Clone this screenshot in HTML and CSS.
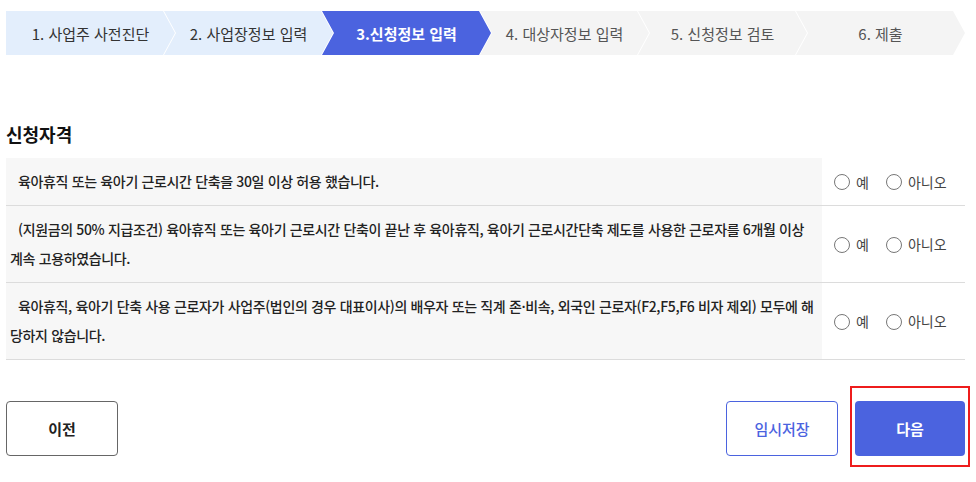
FILE: index.html
```html
<!DOCTYPE html>
<html lang="ko">
<head>
<meta charset="utf-8">
<link rel="stylesheet" href="styles.css">
</head>
<body>
<div class="page">
  <ol class="steps">
    <li class="step done first">1. 사업주 사전진단</li>
    <li class="step done">2. 사업장정보 입력</li>
    <li class="step active">3.신청정보 입력</li>
    <li class="step">4. 대상자정보 입력</li>
    <li class="step">5. 신청정보 검토</li>
    <li class="step">6. 제출</li>
  </ol>

  <h2 class="title">신청자격</h2>

  <div class="table">
    <div class="row row-1">
      <div class="q">육아휴직 또는 육아기 근로시간 단축을 30일 이상 허용 했습니다.</div>
      <div class="a">
        <label class="opt"><span class="radio"></span>예</label>
        <label class="opt"><span class="radio"></span>아니오</label>
      </div>
    </div>
    <div class="row">
      <div class="q">(지원금의 50% 지급조건) 육아휴직 또는 육아기 근로시간 단축이 끝난 후 육아휴직, 육아기 근로시간단축 제도를 사용한 근로자를 6개월 이상 계속 고용하였습니다.</div>
      <div class="a">
        <label class="opt"><span class="radio"></span>예</label>
        <label class="opt"><span class="radio"></span>아니오</label>
      </div>
    </div>
    <div class="row">
      <div class="q">육아휴직, 육아기 단축 사용 근로자가 사업주(법인의 경우 대표이사)의 배우자 또는 직계 존·비속, 외국인 근로자(F2,F5,F6 비자 제외) 모두에 해당하지 않습니다.</div>
      <div class="a">
        <label class="opt"><span class="radio"></span>예</label>
        <label class="opt"><span class="radio"></span>아니오</label>
      </div>
    </div>
  </div>

  <div class="actions">
    <button class="btn btn-prev">이전</button>
    <div class="right">
      <button class="btn btn-save">임시저장</button>
      <div class="highlight"><button class="btn btn-next">다음</button></div>
    </div>
  </div>
</div>
</body>
</html>
```

FILE: styles.css
```css
* { box-sizing: border-box; }
html, body { margin: 0; padding: 0; background: #fff; }
body {
  font-family: "Noto Sans CJK KR", "Noto Sans", sans-serif;
  color: #222;
}
.page {
  width: 976px;
  padding: 11px 11px 0 6px;
}
.steps {
  list-style: none;
  margin: 0;
  padding: 0;
  display: flex;
  height: 44px;
}
.step {
  flex: 0 0 169px;
  height: 44px;
  margin-left: -11px;
  padding-left: 12px;
  padding-right: 12px;
  display: flex;
  align-items: center;
  justify-content: center;
  font-size: 15px;
  color: #555;
  background: #f4f4f4;
  clip-path: polygon(0 0, 157px 0, 169px 50%, 157px 100%, 0 100%, 12px 50%);
}
.step.first {
  margin-left: 0;
  clip-path: polygon(0 0, 157px 0, 169px 50%, 157px 100%, 0 100%);
}
.step.done { background: #e3eefc; color: #333; }
.step.active { background: #4b63df; color: #fff; font-weight: 700; }

.title {
  margin: 66px 0 0 0;
  font-size: 18px;
  font-weight: 700;
  line-height: 26px;
  color: #111;
}
.table {
  margin-top: 11px;
  width: 959px;
}
.row {
  display: flex;
  border-bottom: 1px solid #dcdcdc;
}
.q {
  flex: 0 0 816px;
  background: #f7f7f7;
  padding: 9px 5px 9px 4px;
  font-size: 14px;
  font-weight: 500;
  line-height: 29px;
  letter-spacing: -0.35px;
  color: #222;
  text-indent: 8px;
  word-break: break-all;
}
.a {
  flex: 1;
  display: flex;
  align-items: center;
  padding-left: 12px;
  gap: 17px;
  font-size: 14px;
  color: #444;
}
.opt {
  display: flex;
  align-items: center;
  gap: 6px;
}
.radio {
  width: 16px;
  height: 16px;
  border: 1px solid #777;
  border-radius: 50%;
  background: #fff;
  margin-top: 1px;
}
.actions {
  margin-top: 26px;
  display: flex;
  justify-content: space-between;
  align-items: flex-start;
}
.right {
  display: flex;
  align-items: flex-start;
  gap: 12px;
  margin-right: -5px;
}
.btn {
  font-family: inherit;
  width: 112px;
  height: 55px;
  border-radius: 4px;
  font-size: 15px;
  font-weight: 700;
  background: #fff;
  cursor: pointer;
  padding: 0;
}
.btn-prev { border: 1px solid #666; color: #222; margin-top: 15px; }
.btn-save { border: 1px solid #4b63df; color: #4b63df; font-weight: 500; margin-top: 15px; }
.highlight {
  border: 2px solid #ee1c1c;
  padding: 13px 3px 9px 3px;
}
.btn-next {
  display: block;
  width: 110px;
  height: 55px;
  border: none;
  background: #4b63df;
  color: #fff;
}
```
